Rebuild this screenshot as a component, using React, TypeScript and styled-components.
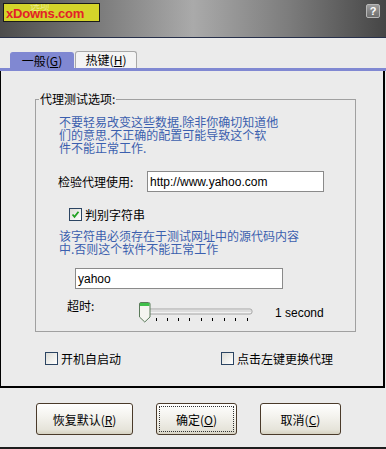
import React from "react";
import styled, { createGlobalStyle } from "styled-components";

const GlobalStyle = createGlobalStyle`
  html, body {
    margin: 0;
    padding: 0;
    background: #ebebeb;
  }
  body {
    font-family: "Noto Sans CJK SC", "Liberation Sans", sans-serif;
    font-size: 12px;
    color: #000;
  }
`;

const Window = styled.div`
  width: 386px;
  height: 449px;
  background: #ebebeb;
  box-sizing: border-box;
  border-bottom: 2px solid #1e1e1e;
  display: flex;
  flex-direction: column;
  overflow: hidden;
`;

const TitleBar = styled.div`
  height: 34px;
  flex: none;
  background: linear-gradient(90deg, #4c4c4c 0%, #7a7a7a 25%, #aaaaaa 50%, #7c7c7c 75%, #454545 100%);
  border-bottom: 1px solid #27304a;
  display: flex;
  align-items: flex-start;
  justify-content: space-between;
  padding: 3px 6px 0 3px;
`;

const Logo = styled.div`
  position: relative;
  width: 93px;
  height: 17px;
  background: #d4d42a;
  border: 1px solid #1a1a1a;
  display: flex;
  align-items: center;
  padding-left: 2px;
  overflow: hidden;
  font-family: "Liberation Sans", sans-serif;
  font-weight: bold;
  font-size: 13px;
  color: #e3202a;
  letter-spacing: -0.2px;
`;

const Watermark = styled.span`
  position: absolute;
  left: 26px;
  top: -3px;
  font-family: "Noto Sans CJK SC", sans-serif;
  font-size: 10px;
  line-height: 10px;
  font-weight: normal;
  color: #ecec8c;
`;

const LogoText = styled.span`
  position: relative;
  margin-top: 2px;
`;

const HelpButton = styled.div`
  margin-top: 1px;
  width: 14px;
  height: 14px;
  box-sizing: border-box;
  border: 1px solid #b8b8b8;
  border-radius: 2px;
  background: linear-gradient(#9c9c9c, #6e6e6e);
  color: #fff;
  font-family: "Liberation Sans", sans-serif;
  font-weight: bold;
  font-size: 11px;
  line-height: 12px;
  text-align: center;
`;

const TabStrip = styled.div`
  margin-top: 13px;
  padding-left: 10px;
  display: flex;
  align-items: flex-end;
  height: 17px;
`;

const Tab = styled.div<{ $active?: boolean }>`
  box-sizing: border-box;
  height: ${({ $active }) => ($active ? 16 : 17)}px;
  width: ${({ $active }) => ($active ? 64 : 62)}px;
  margin-right: 1px;
  border-radius: 3px 3px 0 0;
  background: ${({ $active }) => ($active ? "#8088d2" : "#f4f4f4")};
  border: 1px solid ${({ $active }) => ($active ? "#8088d2" : "#a8a8a8")};
  border-bottom: none;
  display: flex;
  align-items: center;
  justify-content: center;
  font-size: 12px;
  line-height: 14px;
`;

const Key = styled.span`
  text-decoration: underline;
`;

const TabLine = styled.div`
  height: 3px;
  background: #8088d2;
  flex: none;
`;

const Panel = styled.div`
  border-left: 1px solid #000;
  border-right: 2px solid #000;
  border-bottom: 2px solid #000;
  margin-right: 1px;
  padding: 21px 0 21px 0;
`;

const Group = styled.fieldset`
  margin: 0 0 0 34px;
  width: 321px;
  box-sizing: border-box;
  border: 1px solid #a0a0a0;
  padding: 0 0 10px 0;
`;

const Legend = styled.legend`
  margin-left: 3px;
  padding: 0 1px;
  font-size: 12px;
  line-height: 14px;
`;

const Note = styled.div<{ $top: number }>`
  margin: ${({ $top }) => $top}px 0 0 23px;
  color: #3b5fae;
  font-size: 12px;
  line-height: 13px;
`;

const FieldRow = styled.div`
  margin: 17px 0 0 22px;
  display: flex;
  align-items: center;
`;

const FieldLabel = styled.span`
  width: 89px;
  flex: none;
`;

const TextInput = styled.div<{ $width: number; $height: number; $left?: number; $top?: number }>`
  width: ${({ $width }) => $width}px;
  height: ${({ $height }) => $height}px;
  margin: ${({ $top }) => $top ?? 0}px 0 0 ${({ $left }) => $left ?? 0}px;
  box-sizing: border-box;
  background: #fff;
  border: 1px solid #8a8a8a;
  padding-left: 2px;
  display: flex;
  align-items: center;
  font-family: "Liberation Sans", sans-serif;
  font-size: 12px;
`;

const CheckRow = styled.div<{ $left: number; $top: number }>`
  margin: ${({ $top }) => $top}px 0 0 ${({ $left }) => $left}px;
  display: flex;
  align-items: center;
  height: 13px;
`;

const Box = styled.span`
  width: 13px;
  height: 13px;
  box-sizing: border-box;
  border: 1px solid #2b4462;
  background: linear-gradient(135deg, #dcdcd6, #ffffff);
  margin-right: 3px;
  display: flex;
  align-items: center;
  justify-content: center;
  flex: none;
`;

const CheckText = styled.span`
  font-size: 12px;
  line-height: 13px;
`;

const TimeoutRow = styled.div`
  margin: 12px 0 0 31px;
  display: flex;
  align-items: flex-start;
  height: 20px;
`;

const TimeoutLabel = styled.span`
  width: 71px;
  flex: none;
  line-height: 13px;
  margin-top: -2px;
`;

const SecondsText = styled.span`
  margin: 6px 0 0 19px;
  font-family: "Liberation Sans", sans-serif;
  font-size: 12px;
  line-height: 13px;
`;

const BottomChecks = styled.div`
  margin-top: 20px;
  padding-left: 44px;
  display: flex;
`;

const BottomCheck = styled.div<{ $width: number }>`
  width: ${({ $width }) => $width}px;
  display: flex;
  align-items: center;
  height: 13px;
`;

const ButtonRow = styled.div`
  margin-top: 15px;
  padding-left: 36px;
  display: flex;
  gap: 23px;
`;

const Button = styled.div<{ $width: number; $focused?: boolean }>`
  position: relative;
  width: ${({ $width }) => $width}px;
  height: 32px;
  box-sizing: border-box;
  border: 1px solid #4a3a2a;
  border-radius: 3px;
  background: linear-gradient(#ffffff 0%, #f4f3ee 40%, #e6e4da 85%, #d6d2c2 100%);
  display: flex;
  align-items: center;
  justify-content: center;
  font-size: 12px;
  &::after {
    content: "";
    position: absolute;
    inset: 2px;
    border: 1px dotted #333;
    display: ${({ $focused }) => ($focused ? "block" : "none")};
  }
`;

const Tick = () => (
  <svg width="9" height="9" viewBox="0 0 9 9">
    <path d="M1.5 4.5 L3.5 6.8 L7.5 1.8" fill="none" stroke="#21a121" strokeWidth="1.8" />
  </svg>
);

const Slider = () => {
  const ticks = [18, 29, 40, 51, 63, 74, 86, 97, 109];
  return (
    <svg width="118" height="22" viewBox="0 0 118 22">
      <rect x="2" y="8" width="112" height="5" rx="2" fill="#f2f2f2" stroke="#a4a4a4" />
      <line x1="3" y1="10" x2="113" y2="10" stroke="#c8c8c8" />
      {ticks.map((t) => (
        <line key={t} x1={t + 0.5} y1="17" x2={t + 0.5} y2="20" stroke="#000" />
      ))}
      <path d="M1.5 3 Q1.5 1.5 3 1.5 L10.5 1.5 Q12 1.5 12 3 L12 16 L6.75 21 L1.5 16 Z" fill="#f4f4f0" stroke="#5a7a5a" />
      <rect x="2" y="2" width="9.5" height="3" fill="#3fbf4a" />
    </svg>
  );
};

export default function App() {
  return (
    <>
      <GlobalStyle />
      <Window>
        <TitleBar>
          <Logo>
            <Watermark>选项</Watermark>
            <LogoText>xDowns.com</LogoText>
          </Logo>
          <HelpButton>?</HelpButton>
        </TitleBar>

        <TabStrip>
          <Tab $active>
            一般(<Key>G</Key>)
          </Tab>
          <Tab>
            热键(<Key>H</Key>)
          </Tab>
        </TabStrip>
        <TabLine />

        <Panel>
          <Group>
            <Legend>代理测试选项:</Legend>
            <Note $top={9}>
              不要轻易改变这些数据.除非你确切知道他
              <br />
              们的意思.不正确的配置可能导致这个软
              <br />
              件不能正常工作.
            </Note>

            <FieldRow>
              <FieldLabel>检验代理使用:</FieldLabel>
              <TextInput $width={177} $height={21}>
                http://www.yahoo.com
              </TextInput>
            </FieldRow>

            <CheckRow $left={33} $top={16}>
              <Box>
                <Tick />
              </Box>
              <CheckText>判别字符串</CheckText>
            </CheckRow>

            <Note $top={8}>
              该字符串必须存在于测试网址中的源代码内容
              <br />
              中.否则这个软件不能正常工作
            </Note>

            <TextInput $width={208} $height={21} $left={39} $top={13}>
              yahoo
            </TextInput>

            <TimeoutRow>
              <TimeoutLabel>超时:</TimeoutLabel>
              <Slider />
              <SecondsText>1 second</SecondsText>
            </TimeoutRow>
          </Group>

          <BottomChecks>
            <BottomCheck $width={176}>
              <Box />
              <CheckText>开机自启动</CheckText>
            </BottomCheck>
            <BottomCheck $width={140}>
              <Box />
              <CheckText>点击左键更换代理</CheckText>
            </BottomCheck>
          </BottomChecks>
        </Panel>

        <ButtonRow>
          <Button $width={97}>
            恢复默认(<Key>R</Key>)
          </Button>
          <Button $width={81} $focused>
            确定(<Key>O</Key>)
          </Button>
          <Button $width={81}>
            取消(<Key>C</Key>)
          </Button>
        </ButtonRow>
      </Window>
    </>
  );
}
